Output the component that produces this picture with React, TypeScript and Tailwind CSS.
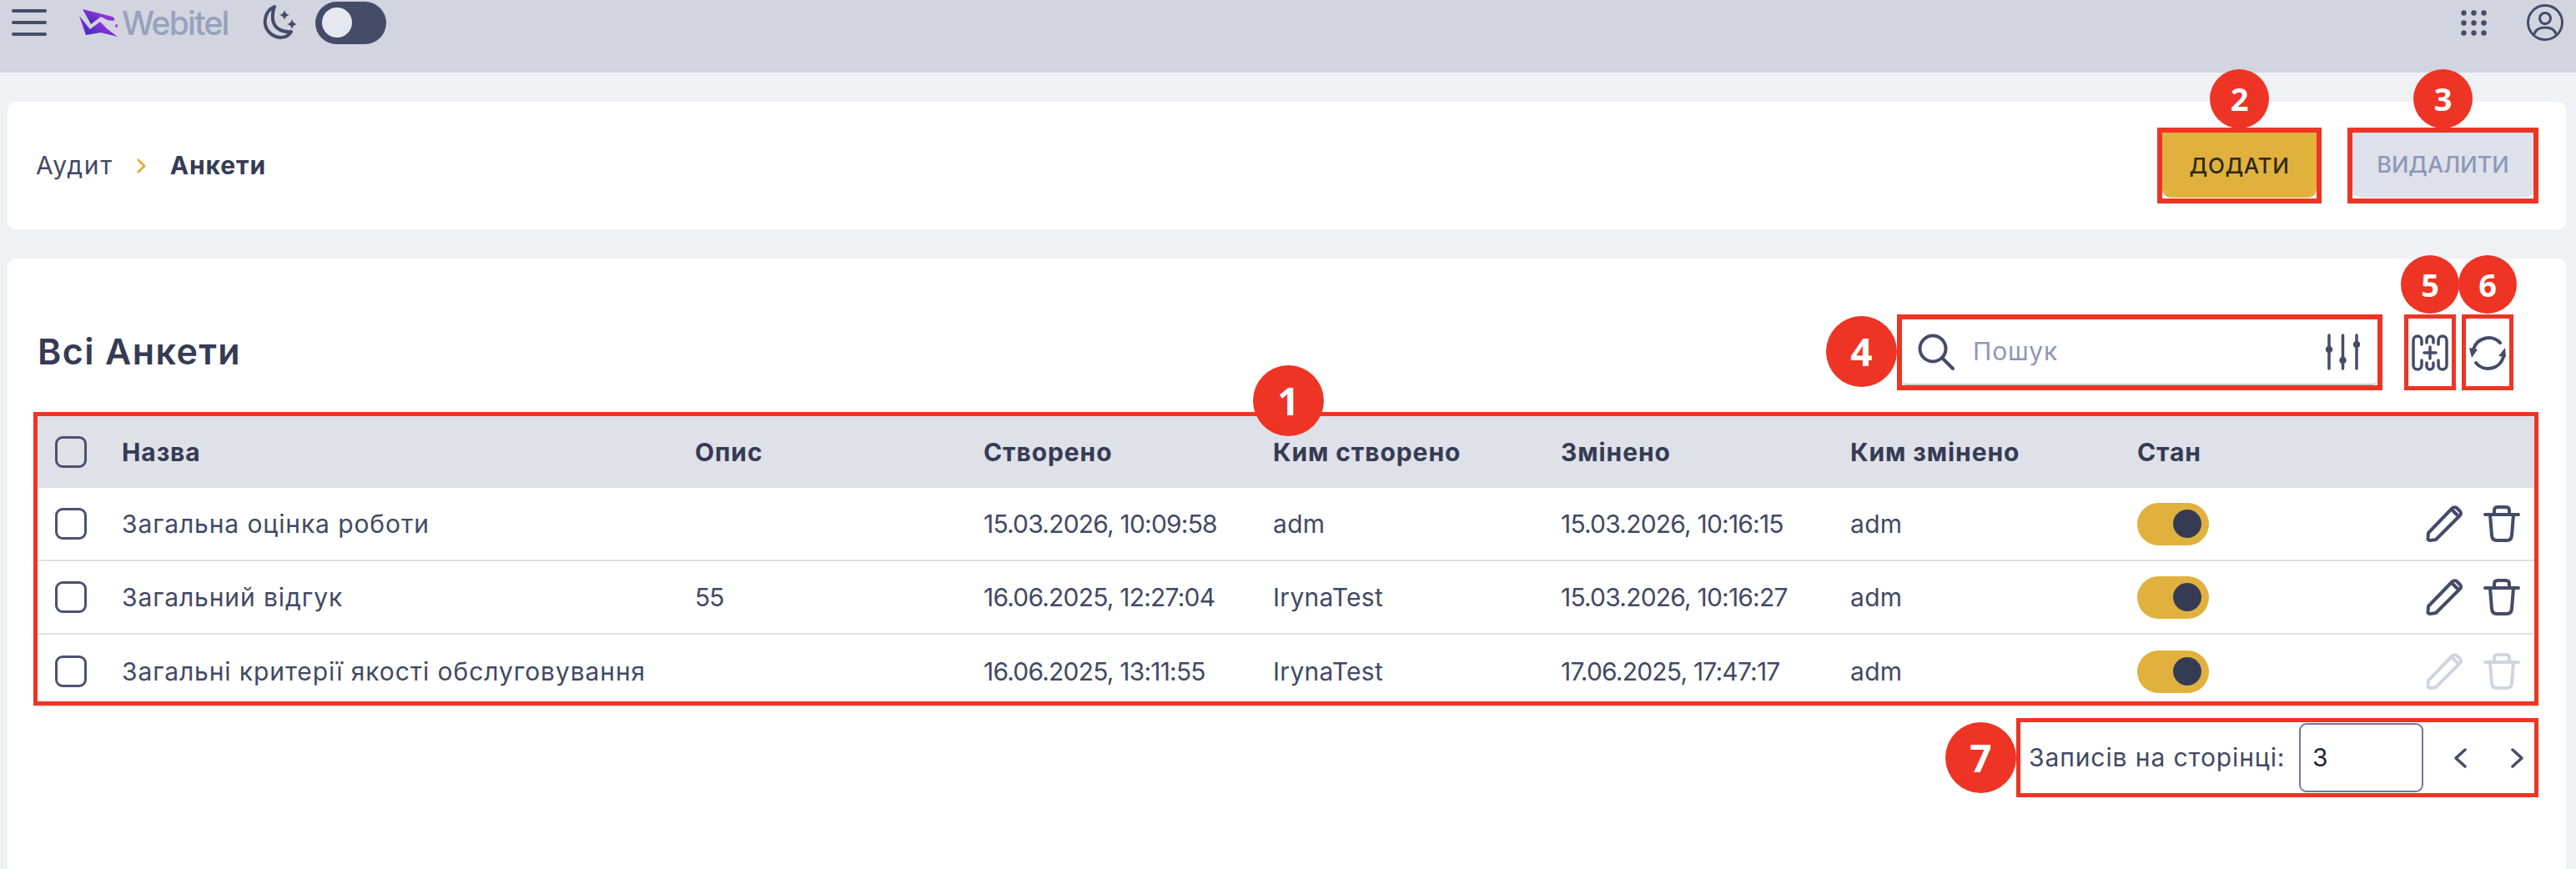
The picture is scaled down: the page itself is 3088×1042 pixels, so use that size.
import type { ReactNode } from "react";

const ROWS = [
  { name: "Загальна оцінка роботи", desc: "", created: "15.03.2026, 10:09:58", by: "adm", changed: "15.03.2026, 10:16:15", changedBy: "adm", locked: false },
  { name: "Загальний відгук", desc: "55", created: "16.06.2025, 12:27:04", by: "IrynaTest", changed: "15.03.2026, 10:16:27", changedBy: "adm", locked: false },
  { name: "Загальні критерії якості обслуговування", desc: "", created: "16.06.2025, 13:11:55", by: "IrynaTest", changed: "17.06.2025, 17:47:17", changedBy: "adm", locked: true },
];

const HEAD = ["Назва", "Опис", "Створено", "Ким створено", "Змінено", "Ким змінено", "Стан"];

function Badge({ n, className }: { n: number; className: string }) {
  return (
    <span className={`absolute z-10 flex items-center justify-center rounded-full bg-[#ee3424] font-['Open_Sans',sans-serif] font-bold tracking-normal text-white ${className}`}>
      {n}
    </span>
  );
}

function Check() {
  return <span className="block h-[38px] w-[38px] rounded-[9px] border-[3px] border-[#4b5270]" />;
}

function Switch() {
  return (
    <span className="flex h-[51px] w-[86px] items-center justify-end rounded-full bg-[#e1b13e] pr-[9px]">
      <span className="h-[34px] w-[34px] rounded-full bg-[#363b54]" />
    </span>
  );
}

function Pencil() {
  return (
    <svg viewBox="0 0 44 44" fill="none" stroke="currentColor" strokeWidth="4" strokeLinejoin="round" strokeLinecap="round" className="h-[44px] w-[44px]">
      <path d="M3 33 L31 4 Q34 1 37 3 L41 7 Q43 10 41 12 L12 41 L5 42 Q2 42 2.500 39 Z" />
      <path d="M31 5 L39 13" />
    </svg>
  );
}

function Trash() {
  return (
    <svg viewBox="0 0 44 44" fill="none" stroke="currentColor" strokeWidth="4" strokeLinejoin="round" strokeLinecap="round" className="h-[44px] w-[44px]">
      <path d="M2 11 H42" />
      <path d="M13 10 V6 Q13 2 17 2 H27 Q31 2 31 6 V10" />
      <path d="M8 11 L10 36 Q10.500 42 16 42 H28 Q33.500 42 34 36 L36 11" />
    </svg>
  );
}

function Cell({ children, className = "" }: { children?: ReactNode; className?: string }) {
  return <div className={`min-w-0 whitespace-nowrap ${className}`}>{children}</div>;
}

export default function App() {
  return (
    <div className="h-[1042px] overflow-hidden bg-[#eff1f5] font-['Inter','Liberation_Sans',sans-serif] text-[30px] tracking-[0.9px] text-[#424964]">
      {/* top bar */}
      <header className="h-[87px] bg-[#d2d5e0]">
        <div className="flex h-[54px] items-center pl-[14px] pr-[15px]">
          <svg viewBox="0 0 42 34" className="h-[34px] w-[42px]" stroke="#454c68" strokeWidth="4" strokeLinecap="round">
            <path d="M2 3 H40 M2 17 H40 M2 31 H40" />
          </svg>
          <svg viewBox="0 0 46 33" className="ml-[39px] h-[33px] w-[46px]">
            <defs>
              <linearGradient id="lg" x1="0" y1="1" x2="1" y2="0">
                <stop offset="0" stopColor="#2a2ab8" />
                <stop offset="0.5" stopColor="#7b32d0" />
                <stop offset="1" stopColor="#c845e8" />
              </linearGradient>
            </defs>
            <path d="M4 0 L40 9 Q44 12 41 14 L34 13 L26 9 L14 18 Z" fill="url(#lg)" />
            <path d="M0 8 L13 24 L25 15 L34 24 L46 33 L26 28 L8 31 Z" fill="url(#lg)" />
            <circle cx="45" cy="20" r="2" fill="#b43ee0" />
          </svg>
          <span className="ml-[5px] w-[132px] text-[39px] leading-none font-medium tracking-[-1.700px] text-[#97a1bd]">Webitel</span>
          <svg viewBox="0 0 42 42" fill="none" className="ml-[36px] h-[42px] w-[42px]">
            <path d="M15 2 C3 7 0 24 9 33 C17 41 30 41 35 32 C24 33 14 28 13 17 C12.500 11 13 6 15 2 Z" stroke="#454c68" strokeWidth="4" strokeLinejoin="round" />
            <path d="M27 6 Q28 11 33 12 Q28 13 27 18 Q26 13 21 12 Q26 11 27 6 Z M36 17 Q37 22 42 23 Q37 24 36 29 Q35 24 30 23 Q35 22 36 17 Z" fill="#454c68" />
          </svg>
          <span className="ml-[22px] flex h-[51px] w-[85px] items-center rounded-full bg-[#454c68] pl-[8px]">
            <span className="h-[36px] w-[36px] rounded-full bg-[#e6e8ef]" />
          </span>
          <svg viewBox="0 0 31 31" fill="#454c68" className="ml-auto h-[31px] w-[31px]">
            <circle cx="3.500" cy="3.500" r="3.200" /><circle cx="15.500" cy="3.500" r="3.200" /><circle cx="27.500" cy="3.500" r="3.200" />
            <circle cx="3.500" cy="15.500" r="3.200" /><circle cx="15.500" cy="15.500" r="3.200" /><circle cx="27.500" cy="15.500" r="3.200" />
            <circle cx="3.500" cy="27.500" r="3.200" /><circle cx="15.500" cy="27.500" r="3.200" /><circle cx="27.500" cy="27.500" r="3.200" />
          </svg>
          <svg viewBox="0 0 44 44" fill="none" stroke="#454c68" strokeWidth="3" className="ml-[48px] h-[44px] w-[44px]">
            <circle cx="22" cy="22" r="20.500" />
            <circle cx="22" cy="17" r="6.500" />
            <path d="M9 36 Q11 28 22 28 Q33 28 35 36" />
          </svg>
        </div>
      </header>

      {/* breadcrumb card */}
      <section className="ml-[9px] mr-[12px] mt-[35px] flex h-[153px] items-center justify-between rounded-[10px] bg-white pl-[34px] pr-[33px]">
        <nav className="flex items-center">
          <span className="tracking-[1.600px]">Аудит</span>
          <svg viewBox="0 0 11 18" fill="none" stroke="#e1b13e" strokeWidth="3" strokeLinecap="round" strokeLinejoin="round" className="ml-[28px] h-[18px] w-[11px]">
            <path d="M2 2 L9 9 L2 16" />
          </svg>
          <span className="ml-[29px] font-bold text-[#363b54]">Анкети</span>
        </nav>
        <div className="flex gap-[31px]">
          <div className="relative h-[91px] w-[197px] border-[6px] border-[#ee3424] bg-white pb-px">
            <Badge n={2} className="-top-[76px] left-[57px] h-[71px] w-[71px] text-[38px]" />
            <button className="flex h-full w-full items-center justify-center rounded-b-[10px] bg-[#e1b13e] text-[26px] font-medium tracking-[0.6px] text-[#2e2a14]">ДОДАТИ</button>
          </div>
          <div className="relative h-[91px] w-[229px] border-[6px] border-[#ee3424] bg-white pb-px">
            <Badge n={3} className="-top-[76px] left-[73px] h-[71px] w-[71px] text-[38px]" />
            <button className="flex h-full w-full items-center justify-center rounded-b-[10px] bg-[#dfe1ea] text-[27px] font-medium tracking-normal text-[#8d97b8]">ВИДАЛИТИ</button>
          </div>
        </div>
      </section>

      {/* list card */}
      <section className="ml-[9px] mr-[12px] mt-[35px] h-[732px] rounded-t-[10px] bg-white pl-[31px] pr-[33px] pt-[67px]">
        <div className="flex h-[91px] items-center">
          <h1 className="mb-[2px] ml-[5px] text-[43px] font-semibold tracking-[1.400px] text-[#363b54]">Всі Анкети</h1>
          <div className="relative ml-auto h-[91px] w-[582px] border-[6px] border-[#ee3424]">
            <Badge n={4} className="-left-[91px] top-[-4px] h-[85px] w-[85px] text-[46px]" />
            <div className="flex h-full items-center rounded-b-[6px] border-b-2 border-[#c6cad8] pl-[19px] pr-[21px]">
              <svg viewBox="0 0 44 44" fill="none" stroke="#454c68" strokeWidth="4" strokeLinecap="round" className="h-[44px] w-[44px]">
                <circle cx="18" cy="18" r="15.500" />
                <path d="M29 29 L42 42" />
              </svg>
              <span className="ml-[22px] text-[#8d97b8]">Пошук</span>
              <svg viewBox="0 0 41 44" fill="#454c68" stroke="#454c68" strokeWidth="3.500" strokeLinecap="round" className="ml-auto h-[44px] w-[41px]">
                <path d="M4 2 V42 M20.500 2 V42 M37 2 V42" />
                <circle cx="4" cy="19" r="2.500" /><circle cx="20.500" cy="32" r="2.500" /><circle cx="37" cy="13" r="2.500" />
              </svg>
            </div>
          </div>
          <div className="relative ml-[26px] flex h-[91px] w-[62px] items-center justify-center border-[5px] border-[#ee3424]">
            <Badge n={5} className="-top-[76px] left-[-9px] h-[70px] w-[70px] text-[38px]" />
            <svg viewBox="0 0 44 44" fill="none" stroke="#454c68" strokeWidth="3.500" strokeLinecap="round" className="h-[44px] w-[44px] shrink-0">
              <path d="M12 12 V7 A5 5 0 0 0 2 7 V37 A5 5 0 0 0 12 37 V31" />
              <path d="M32 12 V7 A5 5 0 0 1 42 7 V37 A5 5 0 0 1 32 37 V31" />
              <path d="M18 10 V6 A4 4 0 0 1 26 6 V10 M18 34 V38 A4 4 0 0 0 26 38 V34" />
              <path d="M22 15 V29 M15 22 H29" />
            </svg>
          </div>
          <div className="relative ml-[7px] mr-[30px] flex h-[91px] w-[62px] items-center justify-center border-[5px] border-[#ee3424]">
            <Badge n={6} className="-top-[76px] left-[-9px] h-[70px] w-[70px] text-[38px]" />
            <svg viewBox="0 0 44 44" fill="none" stroke="#454c68" strokeWidth="4" strokeLinecap="round" className="h-[44px] w-[44px] shrink-0">
              <path d="M5 18 A19 19 0 0 1 37 10" />
              <path d="M41 27 A19 19 0 0 1 8 34" />
              <path d="M0 16 L10 18 L3 28 Z M43 16 L44 27 L35 26 Z" fill="#454c68" stroke="none" />
            </svg>
          </div>
        </div>

        <div className="relative mt-[26px] border-[5px] border-[#ee3424] shadow-[0_2px_0_#e6e8ef]">
          <Badge n={1} className="-top-[61px] left-[1457px] h-[85px] w-[85px] text-[46px]" />
          <div className="grid h-[86px] grid-cols-[101px_687px_346px_347px_345px_347px_344px_200px_1fr] items-center bg-[#dfe1e9] font-bold text-[#363b54]">
            <div className="pl-[21px]"><Check /></div>
            {HEAD.map((h) => (
              <Cell key={h}>{h}</Cell>
            ))}
          </div>
          {ROWS.map((r, i) => (
            <div key={r.name} className={`grid h-[88px] grid-cols-[101px_687px_346px_347px_345px_347px_344px_200px_1fr] items-center ${i < 2 ? "border-b-2 border-[#dfe1e9]" : "-mb-[8px]"}`}>
              <div className="pl-[21px]"><Check /></div>
              <Cell>{r.name}</Cell>
              <Cell className="tracking-[-1px]">{r.desc}</Cell>
              <Cell className="tracking-[-0.800px]">{r.created}</Cell>
              <Cell className="tracking-[0.300px]">{r.by}</Cell>
              <Cell className="tracking-[-0.800px]">{r.changed}</Cell>
              <Cell className="tracking-[0.300px]">{r.changedBy}</Cell>
              <Cell><Switch /></Cell>
              <div className={`flex justify-end gap-[25px] pr-[17px] ${r.locked ? "text-[#d2d5e0]" : "text-[#454c68]"}`}>
                <Pencil />
                <Trash />
              </div>
            </div>
          ))}
        </div>

        <div className="mt-[15px] flex justify-end">
          <div className="relative flex h-[95px] w-[626px] items-center border-[5px] border-[#ee3424] pl-[10px]">
            <Badge n={7} className="-left-[90px] top-[0px] h-[85px] w-[85px] text-[46px]" />
            <span className="w-[324px] shrink-0 whitespace-nowrap">Записів на сторінці:</span>
            <div className="flex h-[83px] w-[149px] shrink-0 items-center rounded-[9px] border-2 border-[#6d7a9e] pl-[14px] text-[#23263a]">3</div>
            <svg viewBox="0 0 17 24" fill="none" stroke="#454c68" strokeWidth="3.500" strokeLinecap="round" strokeLinejoin="round" className="ml-[36px] h-[24px] w-[17px] shrink-0">
              <path d="M14 2 L3 12 L14 22" />
            </svg>
            <svg viewBox="0 0 17 24" fill="none" stroke="#454c68" strokeWidth="3.500" strokeLinecap="round" strokeLinejoin="round" className="ml-[51px] h-[24px] w-[17px] shrink-0">
              <path d="M3 2 L14 12 L3 22" />
            </svg>
          </div>
        </div>
      </section>
    </div>
  );
}
